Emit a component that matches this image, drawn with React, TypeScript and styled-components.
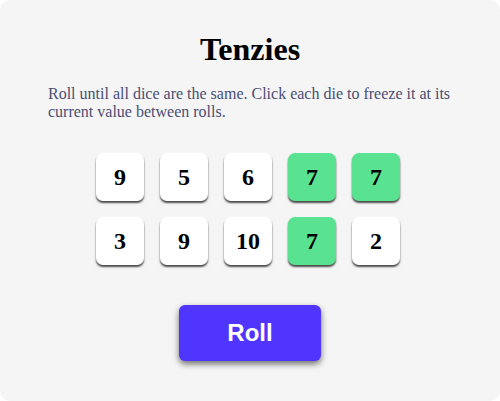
import React from 'react';
import styled, {createGlobalStyle} from 'styled-components';

const GlobalStyle = createGlobalStyle`
  body {
    margin: 0;
    background: #ffffff;
  }
`

const dice = [
    {value: 9, held: false},
    {value: 5, held: false},
    {value: 6, held: false},
    {value: 7, held: true},
    {value: 7, held: true},
    {value: 3, held: false},
    {value: 9, held: false},
    {value: 10, held: false},
    {value: 7, held: true},
    {value: 2, held: false},
];

export default function App() {
    return (
        <>
            <GlobalStyle/>
            <Main>
                <Title>Tenzies</Title>
                <Instructions>
                    Roll until all dice are the same. Click each die to freeze it at its current value between rolls.
                </Instructions>
                <DiceContainer>
                    {dice.map((die, i) => (
                        <Die key={i} $held={die.held}>{die.value}</Die>
                    ))}
                </DiceContainer>
                <RollButton>Roll</RollButton>
            </Main>
        </>
    );
}

const Main = styled.main`
  box-sizing: border-box;
  height: 401px;
  background-color: #f5f5f5;
  border-radius: 10px;
  padding: 31px 48px 0;
  display: flex;
  flex-direction: column;
  align-items: center;
  font-family: "Liberation Serif", "Times New Roman", serif;
`

const Title = styled.h1`
  margin: 0;
  font-size: 32px;
  font-weight: 700;
  color: #000;
`

const Instructions = styled.p`
  margin: 17px 0 0;
  align-self: stretch;
  font-size: 16px;
  line-height: 18px;
  color: #4a4e74;
`

const DiceContainer = styled.div`
  display: grid;
  grid-template-columns: repeat(5, 48px);
  grid-auto-rows: 48px;
  gap: 16px;
  margin-top: 32px;
  margin-right: 4px;
`

const Die = styled.div<{ $held: boolean }>`
  display: flex;
  align-items: center;
  justify-content: center;
  border-radius: 7px;
  background-color: ${props => props.$held ? '#59e391' : '#ffffff'};
  box-shadow: 0 2px 2px rgba(0, 0, 0, 0.7);
  font-size: 24px;
  font-weight: 700;
  color: #000;
  cursor: pointer;
`

const RollButton = styled.button`
  margin-top: 40px;
  width: 142px;
  height: 56px;
  border: none;
  border-radius: 6px;
  background-color: #5035ff;
  color: #fff;
  font-family: "Liberation Sans", Arial, sans-serif;
  font-size: 24px;
  font-weight: 700;
  box-shadow: 0 3px 6px rgba(0, 0, 0, 0.55);
  cursor: pointer;
`
